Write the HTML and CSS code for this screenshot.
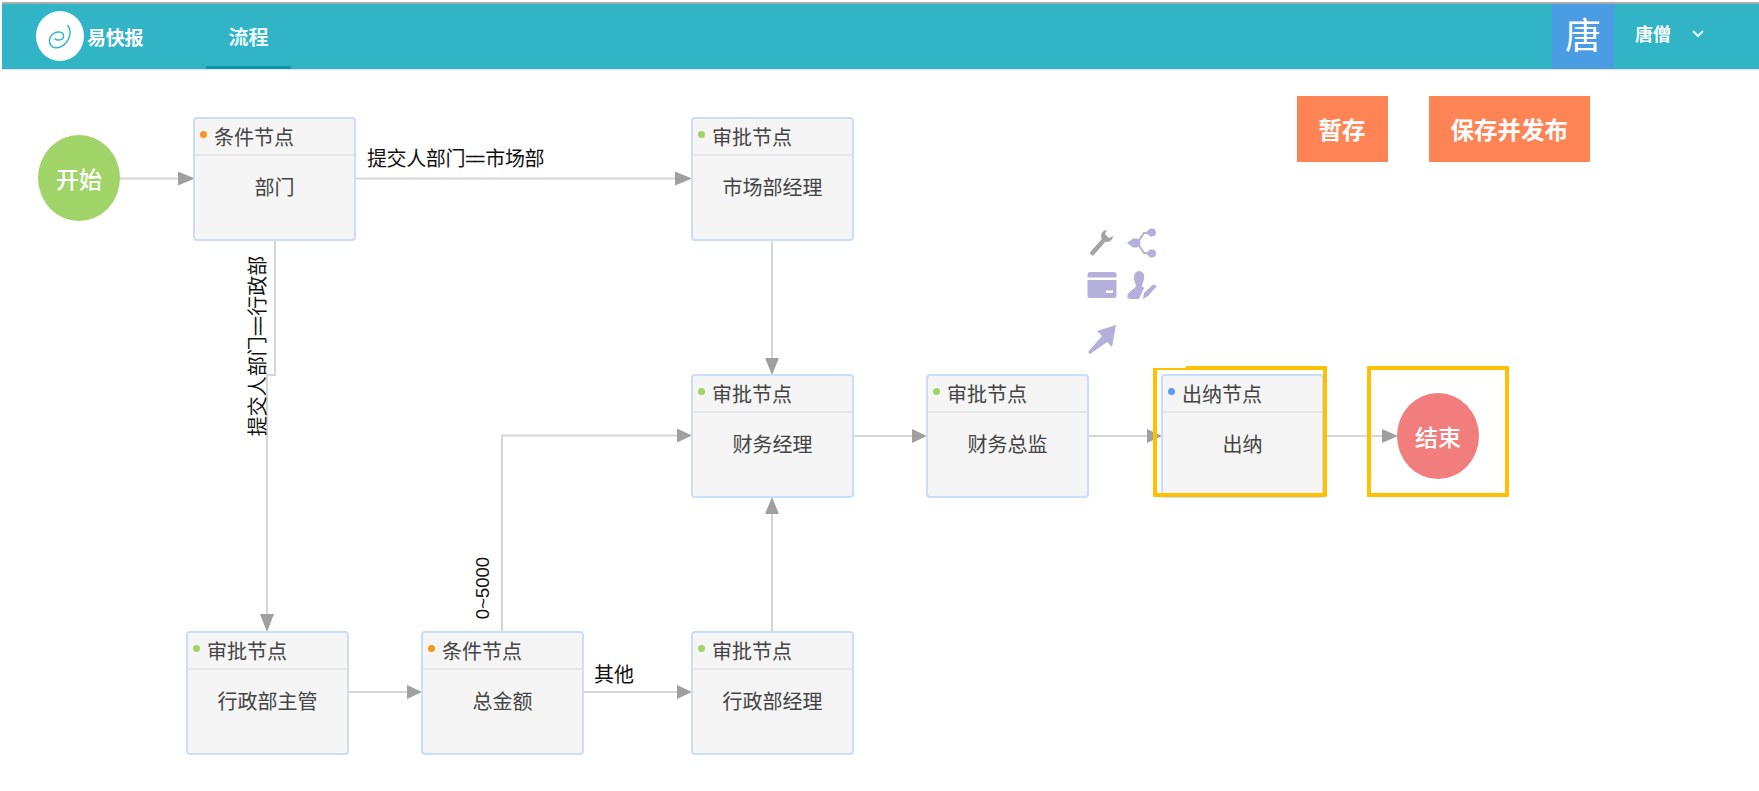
FILE: index.html
```html
<!DOCTYPE html>
<html lang="zh">
<head>
<meta charset="utf-8">
<title>流程</title>
<link rel="stylesheet" href="styles.css">
</head>
<body>
<header class="topbar">
  <div class="brand">
    <span class="brand-logo">
      <svg width="50" height="50" viewBox="0 0 50 50"><path class="swirl" d="M33 14C38 20 35 32 26 36C19 39 14 36 14 30C14 24 20 20 25 21C30 22 30 28 25 29C23 29.500 21 29 20 28"/></svg>
    </span>
    <span class="brand-name">易快报</span>
  </div>
  <nav class="nav"><a class="nav-item">流程</a></nav>
  <div class="user">
    <span class="avatar"><span class="avatar-char">唐</span></span>
    <span class="user-name">唐僧</span>
    <svg class="chevron" width="12" height="8" viewBox="0 0 12 8"><path d="M1 1l5 5 5-5"/></svg>
  </div>
</header>

<main class="canvas">
  <svg class="wires" width="1759" height="722" viewBox="0 69 1759 722">
    <g class="lines">
      <path d="M120 178.500H180"/>
      <path d="M356 178.500H678"/>
      <path d="M275 241V375H267V616"/>
      <path d="M772 241V360"/>
      <path d="M853 436H914"/>
      <path d="M1088 436H1149"/>
      <path d="M1323 436H1384"/>
      <path d="M348 692H409"/>
      <path d="M583 692H679"/>
      <path d="M502 632V435.500H679"/>
      <path d="M772 632V512"/>
    </g>
    <g class="heads">
      <path d="M178 171.500L195 178.500 178 185.500Z"/>
      <path d="M675 171.500L692 178.500 675 185.500Z"/>
      <path d="M260 614L267 632 274 614Z"/>
      <path d="M765 358L772 375 779 358Z"/>
      <path d="M912 429L927 436 912 443Z"/>
      <path d="M1147 429L1162 436 1147 443Z"/>
      <path d="M1382 429L1398 436 1382 443Z"/>
      <path d="M407 685L422 692 407 699Z"/>
      <path d="M677 685L692 692 677 699Z"/>
      <path d="M677 428.500L692 435.500 677 442.500Z"/>
      <path d="M765 514L772 497 779 514Z"/>
    </g>
  </svg>

  <div class="toolbar">
    <button class="btn">暂存</button>
    <button class="btn">保存并发布</button>
  </div>

  <div class="circle start">开始</div>
  <div class="circle end">结束</div>

  <div class="node n-dept"><div class="node-head"><i class="dot cond"></i>条件节点</div><div class="node-body">部门</div></div>
  <div class="node n-market"><div class="node-head"><i class="dot appr"></i>审批节点</div><div class="node-body">市场部经理</div></div>
  <div class="node n-fin"><div class="node-head"><i class="dot appr"></i>审批节点</div><div class="node-body">财务经理</div></div>
  <div class="node n-cfo"><div class="node-head"><i class="dot appr"></i>审批节点</div><div class="node-body">财务总监</div></div>
  <div class="node n-cash"><div class="node-head"><i class="dot pay"></i>出纳节点</div><div class="node-body">出纳</div></div>
  <div class="node n-admin"><div class="node-head"><i class="dot appr"></i>审批节点</div><div class="node-body">行政部主管</div></div>
  <div class="node n-amount"><div class="node-head"><i class="dot cond"></i>条件节点</div><div class="node-body">总金额</div></div>
  <div class="node n-adminmgr"><div class="node-head"><i class="dot appr"></i>审批节点</div><div class="node-body">行政部经理</div></div>

  <span class="label l-market">提交人部门<b class="eq">==</b>市场部</span>
  <span class="label l-admin">提交人部门<b class="eq">==</b>行政部</span>
  <span class="label l-range">0~5000</span>
  <span class="label l-other">其他</span>

  <div class="mark mark-cash"></div>
  <div class="mark mark-end"></div>

  <div class="tools">
    <svg width="30" height="30" viewBox="0 0 30 30"><path class="ic-gray" d="M20 2A6 6 0 1 0 26 8L22 10 18 6Z"/><path class="ic-gray-line" d="M16 13L5.500 25"/></svg>
    <svg width="30" height="30" viewBox="0 0 30 30"><path class="ic-line" d="M8 15H11M11 14L17 5H21M11 16L17 25H21"/><path class="ic-fill" d="M0 15L6 10.500H9A4.500 4.500 0 0 1 9 19.500H6ZM19 4.500L23 0.500H25A4 4 0 0 1 25 8.500H23ZM19 25.500L23 21.500H25A4 4 0 0 1 25 29.500H23Z"/></svg>
    <svg width="30" height="30" viewBox="0 0 30 30"><path class="ic-fill" fill-rule="evenodd" d="M3 2H27A2.500 2.500 0 0 1 29.500 4.500V25.500A2.500 2.500 0 0 1 27 28H3A2.500 2.500 0 0 1 .5 25.500V4.500A2.500 2.500 0 0 1 3 2ZM.5 7.500V10H29.500V7.500ZM19 20.500V23H26V20.500Z"/></svg>
    <svg width="30" height="30" viewBox="0 0 30 30"><path class="ic-fill" d="M12 1C16 1 18 5 17 9 16.500 12 15 14 15 16L17 18 12 29H3C0 29 0 26 1 24 3 20 8 19 9 16 9 14 7 12 7 8 7 4 9 1 12 1ZM26 14.500L30 16 21 26 16 29 17 23Z"/></svg>
    <svg width="30" height="30" viewBox="0 0 30 30"><path class="ic-fill" d="M29 1L25 23 20 18 3 30 1 28 15 12 10 7Z"/></svg>
  </div>
</main>
</body>
</html>
```

FILE: styles.css
```css
* { box-sizing: border-box; }
html, body { margin: 0; padding: 0; background: #fff; overflow: hidden; }
body {
  width: 1759px;
  height: 791px;
  font-family: "Noto Sans CJK SC", "Liberation Sans", sans-serif;
  color: #444;
}

.topbar {
  display: flex;
  align-items: stretch;
  height: 67px;
  margin: 2px 0 0 2px;
  background: #31b4c5;
  border-top: 2px solid #a9adb0;
  box-shadow: 0 1px 0 #dfe3e5;
  color: #fff;
}
.brand { display: flex; align-items: center; margin-left: 34px; width: 170px; }
.brand-logo { width: 48px; height: 50px; flex: none; border-radius: 50%; background: #fff; display: flex; align-items: center; justify-content: center; margin-top: -1px; }
.swirl { fill: none; stroke: #31b4c5; stroke-width: 1.500; stroke-linecap: round; }
.brand-name { font-size: 19px; font-weight: 700; margin-left: 3px; letter-spacing: -.3px; }
.nav { display: flex; }
.nav-item {
  display: flex;
  align-items: center;
  justify-content: center;
  width: 85px;
  padding-top: 2px;
  font-size: 20px;
  font-weight: 700;
  color: #eaf8fa;
  border-bottom: 3px solid #0a98a8;
}
.user { display: flex; align-items: center; margin-left: auto; }
.avatar { width: 62px; align-self: stretch; background: #4a9ce3; display: flex; align-items: center; justify-content: center; }
.avatar-char { font-size: 36px; line-height: 1; margin-top: -7px; }
.user-name { font-size: 18px; font-weight: 700; margin: -7px 0 0 21px; }
.chevron { margin: -5px 55px 0 21px; }
.chevron path { fill: none; stroke: #e6f7f9; stroke-width: 2; }

.canvas { position: relative; height: 722px; }
.wires { position: absolute; left: 0; top: 0; }
.lines path { fill: none; stroke: #d6d6d6; stroke-width: 2; }
.heads path { fill: #a0a0a0; }

.toolbar { position: relative; display: flex; justify-content: flex-end; gap: 41px; padding: 27px 169px 0 0; }
.btn {
  height: 66px;
  padding: 0 22px;
  border: 0;
  background: #ff8455;
  color: #fff;
  font: 700 23.500px "Noto Sans CJK SC", sans-serif;
}

.circle {
  position: absolute;
  width: 82px;
  height: 86px;
  border-radius: 50%;
  display: flex;
  align-items: center;
  justify-content: center;
  color: #fff;
  font-size: 23px;
  font-weight: 500;
}
.start { left: 38px; top: 66px; background: #a0d468; }
.end { left: 1397px; top: 324px; background: #f27d7d; }

.node {
  position: absolute;
  width: 163px;
  height: 124px;
  background: #f5f5f5;
  border: 2px solid #c9dff9;
  border-radius: 4px;
}
.node-head {
  display: flex;
  align-items: center;
  height: 37px;
  padding-left: 5px;
  border-bottom: 2px solid #e6e6e6;
  font-size: 20px;
  line-height: 1;
  color: #444;
}
.node-body { padding-top: 18px; text-align: center; font-size: 20px; line-height: 26px; color: #444; }
.dot { width: 7px; height: 7px; border-radius: 50%; margin-right: 7px; margin-top: -4px; flex: none; }
.dot.cond { background: #f7941d; }
.dot.appr { background: #a0d468; }
.dot.pay { background: #5d9cec; }

.n-dept { left: 193px; top: 48px; }
.n-market { left: 691px; top: 48px; }
.n-fin { left: 691px; top: 305px; }
.n-cfo { left: 926px; top: 305px; }
.n-cash { left: 1161px; top: 305px; }
.n-admin { left: 186px; top: 562px; }
.n-amount { left: 421px; top: 562px; }
.n-adminmgr { left: 691px; top: 562px; }

.label { position: absolute; color: #111; font-size: 20px; line-height: 24px; white-space: nowrap; }
.eq { font-weight: 400; font-family: "Liberation Sans", sans-serif; letter-spacing: -3px; margin-right: 3px; }
.l-market { left: 367px; top: 77px; letter-spacing: -.4px; }
.l-other { left: 594px; top: 593px; }
.l-admin { left: 257px; top: 277px; transform: translate(-50%, -50%) rotate(-90deg); }
.l-range { left: 483px; top: 519px; font-family: "Liberation Sans", sans-serif; font-size: 18.500px; transform: translate(-50%, -50%) rotate(-90deg); }

.mark { position: absolute; border: 4px solid #ffc000; border-radius: 1px; }
.mark-cash { left: 1153px; top: 297px; width: 174px; height: 131px; }
.mark-cash::before { content: ""; position: absolute; left: -4px; top: -4px; width: 33px; height: 2px; background: #fff; }
.mark-end { left: 1367px; top: 297px; width: 142px; height: 131px; }

.tools {
  position: absolute;
  left: 1087px;
  top: 159px;
  display: grid;
  grid-template-columns: 30px 30px;
  grid-template-rows: 42px 54px 30px;
  column-gap: 10px;
}
.ic-gray { fill: #a3a3a3; }
.ic-gray-line { fill: none; stroke: #a3a3a3; stroke-width: 4.500; stroke-linecap: round; }
.ic-fill { fill: #b3b1dc; }
.ic-line { fill: none; stroke: #b3b1dc; stroke-width: 2; }
```
